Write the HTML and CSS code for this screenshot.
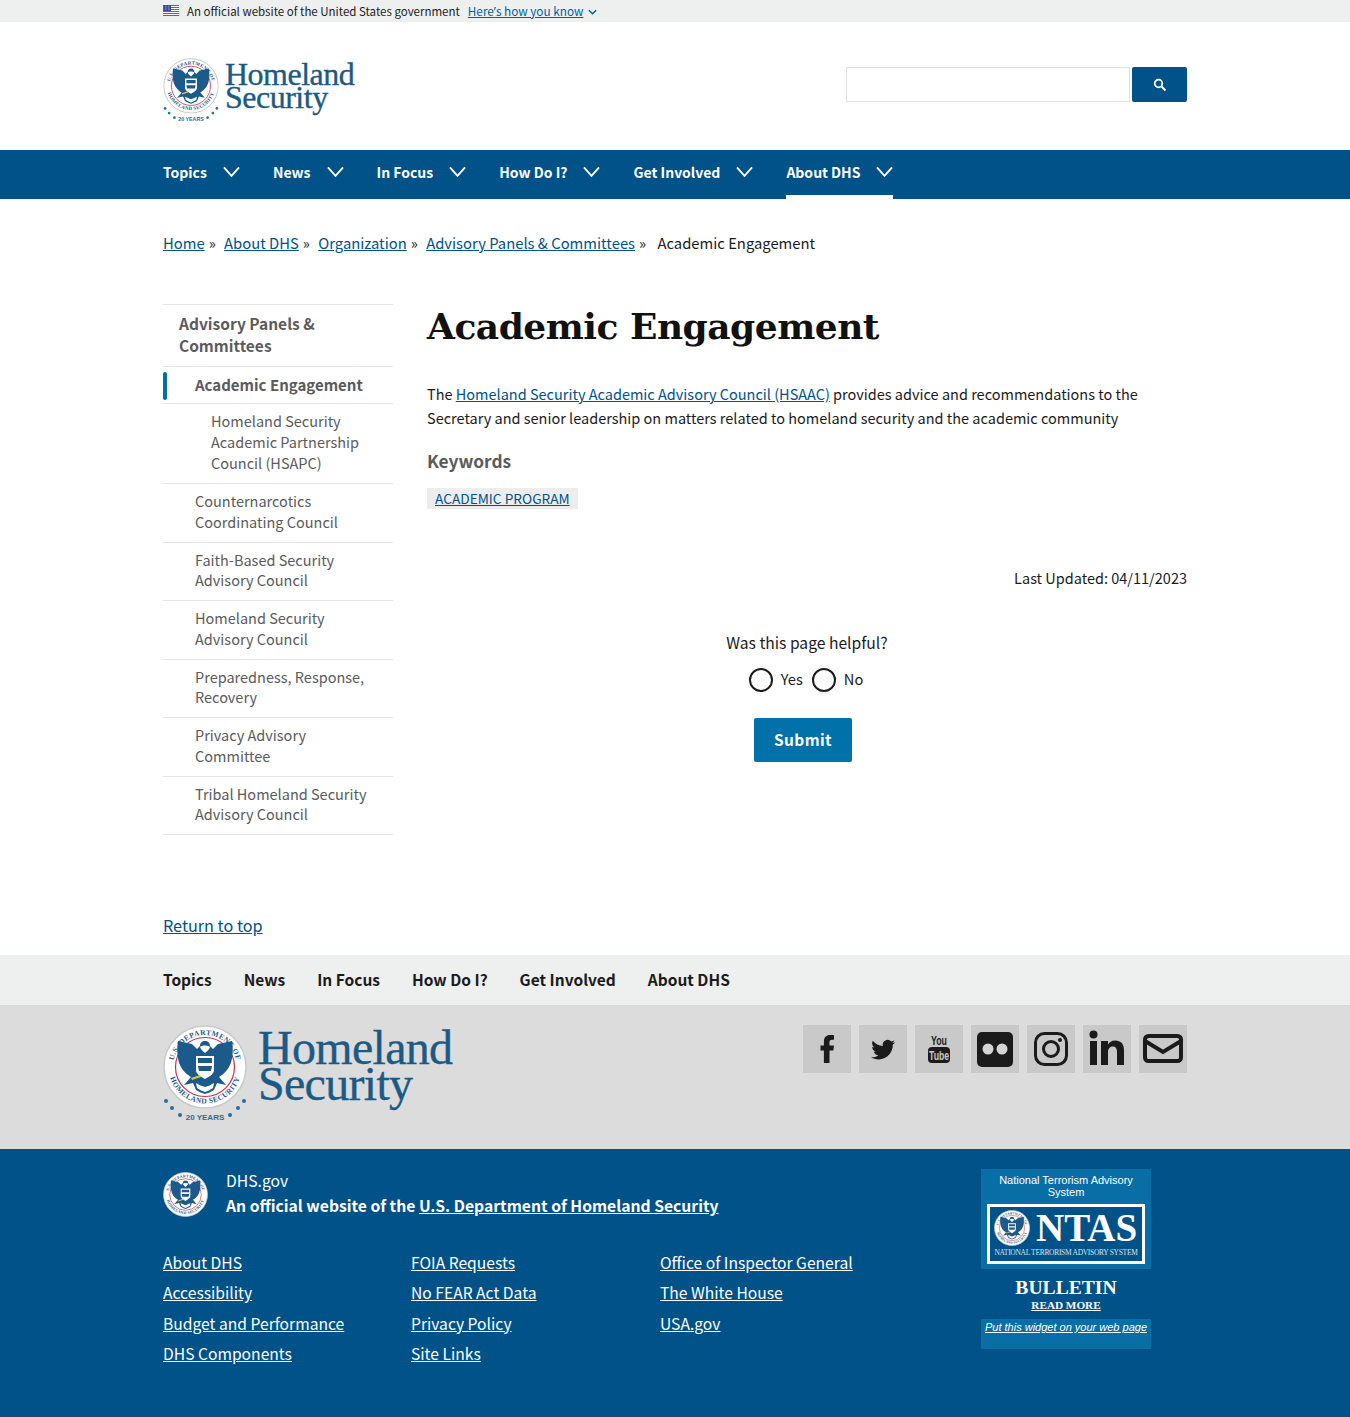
FILE: index.html
```html
<!DOCTYPE html>
<html lang="en">
<head>
<meta charset="utf-8">
<title>Academic Engagement | Homeland Security</title>
<link rel="stylesheet" href="styles.css">
</head>
<body>
<svg class="defs" aria-hidden="true">
  <defs>
    <path id="arc-top" d="M10 42a32 32 0 0 1 64 0"/>
    <path id="arc-bot" d="M5.500 42a36.500 36.500 0 0 0 73 0"/>
    <symbol id="seal" viewBox="0 0 84 84">
      <circle cx="42" cy="42" r="41" fill="#fff" stroke="#c8c8c8" stroke-width="1.500"/>
      <circle cx="42" cy="42" r="29.500" fill="#fff" stroke="#c4314b" stroke-width="1.200"/>
      <path fill="#1b5a8a" d="M42 16c-3 0-5 2-5 5l-3 3-5-5-14-3c-1 4-1 12 0 17 1 8 6 15 13 19l-7 8 9-2 3 7c3 2 6 3 9 4 3-1 6-2 9-4l3-7 9 2-7-8c7-4 12-11 13-19 1-5 1-13 0-17l-14 3-5 5-3-3c0-3-2-5-5-5z"/>
      <path fill="#fff" d="M37 22c2-2 8-2 10 0-1 3-3 4-5 6-2-2-4-3-5-6z"/>
      <path fill="#fff" d="M33 31h18v14c0 4-4 6-9 9-5-3-9-5-9-9z"/>
      <path fill="#1b5a8a" d="M35 33h14v5H35zM35 41h14l-1 5H36z"/>
      <path fill="#fff" d="M33 58c3 2 6 3 9 4 3-1 6-2 9-4l-1 5c-3 2-5 3-8 4-3-1-5-2-8-4z"/>
      <path fill="#d5c34a" d="M28 53l9-3 1 2-9 3z"/>
      <text class="seal-text"><textPath href="#arc-top" startOffset="50%" text-anchor="middle">U.S. DEPARTMENT OF</textPath></text>
      <text class="seal-text"><textPath href="#arc-bot" startOffset="50%" text-anchor="middle">HOMELAND SECURITY</textPath></text>
    </symbol>
    <symbol id="seal-20" viewBox="0 0 84 98">
      <use href="#seal" x="0" y="0" width="84" height="84"/>
      <text class="years" x="42" y="95" text-anchor="middle">20 YEARS</text>
      <g fill="#2a6d9a">
        <circle cx="3" cy="76" r="2"/><circle cx="9" cy="83" r="2"/><circle cx="17" cy="90" r="2"/>
        <circle cx="81" cy="76" r="2"/><circle cx="75" cy="83" r="2"/><circle cx="67" cy="90" r="2"/>
      </g>
    </symbol>
  </defs>
</svg>

<div class="gov-banner">
  <div class="wrap gov-row">
    <svg class="flag" viewBox="0 0 16 11" aria-hidden="true">
      <rect width="16" height="11" fill="#fff"/>
      <path fill="#d8394a" d="M0 0h16v1H0zM0 2h16v1H0zM0 4h16v1H0zM0 6h16v1H0zM0 8h16v1H0zM0 10h16v1H0z"/>
      <rect width="8" height="6" fill="#2d3a8c"/>
      <path stroke="#fff" stroke-width=".7" stroke-dasharray=".7 .8" d="M.5 1.200h7M.5 3h7M.5 4.800h7"/>
    </svg>
    <span class="gov-text">An official website of the United States government</span>
    <a class="gov-link" href="#">Here<span class="apos">’</span>s how you know</a>
    <svg class="gov-caret" viewBox="0 0 10 6" aria-hidden="true"><path d="M1 1l4 4 4-4" fill="none" stroke="#005ea2" stroke-width="1.600"/></svg>
  </div>
</div>

<header class="wrap site-header">
  <a class="logo logo-small" href="#">
    <svg class="logo-seal" aria-hidden="true"><use href="#seal-20"/></svg>
    <span class="wordmark">Homeland<br>Security</span>
  </a>
  <form class="search">
    <input class="search-input" type="text" aria-label="Search">
    <button class="search-btn" type="button" aria-label="Search">
      <svg viewBox="0 0 14 14" aria-hidden="true"><circle cx="5.500" cy="5.500" r="3.800" fill="none" stroke="#fff" stroke-width="1.800"/><path d="M8.500 8.500l4 4" stroke="#fff" stroke-width="2"/></svg>
    </button>
  </form>
</header>

<nav class="main-nav">
  <div class="wrap nav-row">
    <a class="nav-item" href="#"><span>Topics</span><svg class="chev" viewBox="0 0 18 12"><path d="M1 1l8 9 8-9"/></svg></a>
    <a class="nav-item" href="#"><span>News</span><svg class="chev" viewBox="0 0 18 12"><path d="M1 1l8 9 8-9"/></svg></a>
    <a class="nav-item" href="#"><span>In Focus</span><svg class="chev" viewBox="0 0 18 12"><path d="M1 1l8 9 8-9"/></svg></a>
    <a class="nav-item" href="#"><span>How Do I?</span><svg class="chev" viewBox="0 0 18 12"><path d="M1 1l8 9 8-9"/></svg></a>
    <a class="nav-item" href="#"><span>Get Involved</span><svg class="chev" viewBox="0 0 18 12"><path d="M1 1l8 9 8-9"/></svg></a>
    <a class="nav-item active" href="#"><span>About DHS</span><svg class="chev" viewBox="0 0 18 12"><path d="M1 1l8 9 8-9"/></svg></a>
  </div>
</nav>

<div class="wrap crumbs">
  <a href="#">Home</a><span class="sep">»</span>
  <a href="#">About DHS</a><span class="sep">»</span>
  <a href="#">Organization</a><span class="sep">»</span>
  <a href="#">Advisory Panels &amp; Committees</a><span class="sep">»</span>
  <span class="crumb-current">Academic Engagement</span>
</div>

<main class="wrap layout">
  <aside class="side">
    <a class="side-title" href="#">Advisory Panels &amp; Committees</a>
    <a class="side-item current" href="#">Academic Engagement</a>
    <a class="side-item nested" href="#">Homeland Security Academic Partnership Council (HSAPC)</a>
    <a class="side-item" href="#">Counternarcotics Coordinating Council</a>
    <a class="side-item" href="#">Faith-Based Security Advisory Council</a>
    <a class="side-item" href="#">Homeland Security Advisory Council</a>
    <a class="side-item" href="#">Preparedness, Response, Recovery</a>
    <a class="side-item" href="#">Privacy Advisory Committee</a>
    <a class="side-item" href="#">Tribal Homeland Security Advisory Council</a>
  </aside>
  <article class="content">
    <h1 class="title">Academic Engagement</h1>
    <p class="lead">The <a href="#">Homeland Security Academic Advisory Council (HSAAC)</a> provides advice and recommendations to the Secretary and senior leadership on matters related to homeland security and the academic community</p>
    <h2 class="kw-head">Keywords</h2>
    <div class="kw-row"><a class="kw-tag" href="#">ACADEMIC PROGRAM</a></div>
    <div class="updated">Last Updated: 04/11/2023</div>
    <form class="helpful">
      <div class="helpful-q">Was this page helpful?</div>
      <div class="helpful-opts">
        <span class="radio"></span><span class="opt">Yes</span>
        <span class="radio"></span><span class="opt">No</span>
      </div>
      <button class="submit" type="button">Submit</button>
    </form>
  </article>
</main>

<div class="wrap top-link"><a href="#">Return to top</a></div>

<div class="foot-nav">
  <div class="wrap foot-nav-row">
    <a href="#">Topics</a><a href="#">News</a><a href="#">In Focus</a><a href="#">How Do I?</a><a href="#">Get Involved</a><a href="#">About DHS</a>
  </div>
</div>

<div class="foot-logo">
  <div class="wrap foot-logo-row">
    <a class="logo logo-large" href="#">
      <svg class="logo-seal" aria-hidden="true"><use href="#seal-20"/></svg>
      <span class="wordmark">Homeland<br>Security</span>
    </a>
    <div class="social">
      <a class="soc" href="#" aria-label="Facebook"><svg viewBox="0 0 48 48"><path d="M26.500 38V25.500h3.800l.7-5h-4.500v-3.200c0-1.500.5-2.500 2.500-2.500H31V10.300c-.5-.1-2-.3-3.800-.3-3.800 0-6.300 2.300-6.300 6.500v4h-3.400v5h3.400V38z"/></svg></a>
      <a class="soc" href="#" aria-label="Twitter"><svg viewBox="0 0 48 48"><path d="M36 17.200c-.9.400-1.800.6-2.800.8 1-.6 1.800-1.600 2.200-2.700-1 .6-2 1-3.100 1.200a4.900 4.900 0 0 0-8.400 4.500c-4.100-.2-7.700-2.200-10.100-5.200-1.300 2.200-.7 5.100 1.500 6.600-.8 0-1.600-.2-2.200-.6 0 2.400 1.700 4.400 3.900 4.900-.7.200-1.500.2-2.200.1.600 1.900 2.400 3.400 4.600 3.400-2.100 1.600-4.700 2.300-7.300 2 2.200 1.400 4.800 2.200 7.500 2.200 9.300 0 14.500-7.800 14.200-14.800 1-.7 1.800-1.600 2.400-2.600z"/></svg></a>
      <a class="soc" href="#" aria-label="YouTube"><svg viewBox="0 0 48 48"><text class="yt-you" x="24" y="20" text-anchor="middle" textLength="16" lengthAdjust="spacingAndGlyphs">You</text><rect x="13" y="22" width="22" height="16" rx="4"/><text class="yt-tube" x="24" y="35" text-anchor="middle" textLength="20" lengthAdjust="spacingAndGlyphs">Tube</text></svg></a>
      <a class="soc" href="#" aria-label="Flickr"><svg viewBox="0 0 48 48"><rect x="6" y="7" width="36" height="35" rx="5"/><circle cx="17" cy="24" r="5.500" fill="#d4d4d4"/><circle cx="31" cy="24" r="5.500" fill="#d4d4d4"/></svg></a>
      <a class="soc" href="#" aria-label="Instagram"><svg viewBox="0 0 48 48"><rect x="8.500" y="8.500" width="31" height="31" rx="9" fill="none" stroke="#1b1b1b" stroke-width="3"/><circle cx="24" cy="24" r="7.500" fill="none" stroke="#1b1b1b" stroke-width="3"/><circle cx="33" cy="15" r="2"/></svg></a>
      <a class="soc" href="#" aria-label="LinkedIn"><svg viewBox="0 0 48 48"><circle cx="10.500" cy="9.500" r="4"/><rect x="7" y="16" width="7" height="24"/><path d="M18 16h7v3.500c1.200-2.300 3.700-4 7-4 6 0 9 3.500 9 10V40h-7V27c0-3.500-1.200-5.500-4-5.500s-5 2-5 5.500v13h-7z"/></svg></a>
      <a class="soc" href="#" aria-label="Email"><svg viewBox="0 0 48 48"><rect x="6" y="11" width="36" height="25" rx="3.500" fill="none" stroke="#1b1b1b" stroke-width="4"/><path d="M6 16l18 11 18-11" fill="none" stroke="#1b1b1b" stroke-width="4"/></svg></a>
    </div>
  </div>
</div>

<footer class="foot-main">
  <div class="wrap foot-main-row">
    <div class="foot-left">
      <div class="identity">
        <svg class="id-seal" aria-hidden="true"><use href="#seal"/></svg>
        <div>
          <div class="id-site">DHS.gov</div>
          <div class="id-line">An official website of the <a href="#">U.S. Department of Homeland Security</a></div>
        </div>
      </div>
      <div class="foot-links">
        <a href="#">About DHS</a><a href="#">FOIA Requests</a><a href="#">Office of Inspector General</a>
        <a href="#">Accessibility</a><a href="#">No FEAR Act Data</a><a href="#">The White House</a>
        <a href="#">Budget and Performance</a><a href="#">Privacy Policy</a><a href="#">USA.gov</a>
        <a href="#">DHS Components</a><a href="#">Site Links</a>
      </div>
    </div>
    <aside class="ntas">
      <div class="ntas-top">
        <div class="ntas-title">National Terrorism Advisory System</div>
        <div class="ntas-box">
          <div class="ntas-brand">
            <svg class="ntas-seal" aria-hidden="true"><use href="#seal"/></svg>
            <span class="ntas-word">NTAS</span>
          </div>
          <div class="ntas-sub">NATIONAL TERRORISM ADVISORY SYSTEM</div>
        </div>
      </div>
      <div class="ntas-mid">
        <div class="ntas-bulletin">BULLETIN</div>
        <a class="ntas-read" href="#">READ MORE</a>
      </div>
      <div class="ntas-bot"><a href="#">Put this widget on your web page</a></div>
    </aside>
  </div>
</footer>
</body>
</html>
```
FILE: styles.css
```css
* { box-sizing: border-box; }
html, body { margin: 0; padding: 0; }
body {
  font-family: "Noto Sans CJK SC", "Noto Sans", sans-serif;
  font-size: 14.500px;
  color: #1b1b1b;
  background: #fff;
}
.defs { position: absolute; width: 0; height: 0; overflow: hidden; }
.wrap { width: 1024px; margin: 0 auto; }
a { color: #005288; }

.seal-text { font: 700 7.500px "Liberation Serif", serif; fill: #1b5a8a; letter-spacing: .4px; }
.years { font: 700 8px "Liberation Sans", sans-serif; fill: #2a6d9a; }

.gov-banner { background: #eeefef; height: 22px; }
.gov-row { display: flex; align-items: center; height: 21px; font-size: 11.500px; }
.flag { width: 16px; height: 11px; margin-right: 8px; }
.gov-text { margin-right: 8px; }
.gov-link { color: #005ea2; font-size: 11.750px; }
.apos { font-family: "Noto Sans", sans-serif; }
.gov-caret { width: 9px; height: 6px; margin-left: 5px; margin-top: 2px; }

.site-header { height: 128px; display: flex; justify-content: space-between; align-items: flex-start; }
.logo { display: flex; text-decoration: none; color: #1b5a86; }
.logo-small { margin-top: 36px; }
.logo-small .logo-seal { width: 56px; height: 65px; margin-right: 6px; }
.wordmark { font-family: "Liberation Serif", serif; display: block; -webkit-text-stroke: .35px #1b5a86; }
.logo-small .wordmark { font-size: 32px; line-height: 23px; padding-top: 5px; letter-spacing: -.5px; }
.search { display: flex; margin-top: 45px; gap: 2px; }
.search-input { width: 284px; height: 35px; border: 1px solid #dfe1e2; background: #fff; }
.search-btn { width: 55px; height: 35px; border: 0; background: #005288; border-radius: 2px; display: flex; align-items: center; justify-content: center; padding: 0; }
.search-btn svg { width: 14px; height: 14px; }

.main-nav { background: #005288; height: 49px; }
.nav-row { display: flex; gap: 33px; height: 49px; }
.nav-item { display: flex; align-items: center; color: #fff; font-weight: 700; font-size: 14px; text-decoration: none; height: 49px; padding-bottom: 5px; }
.nav-item span { margin-right: 16px; }
.chev { width: 17px; height: 12px; fill: none; stroke: #fff; stroke-width: 2; }
.nav-item.active { border-bottom: 4px solid #fff; padding-bottom: 1px; }

.crumbs { padding-top: 33px; height: 105px; font-size: 14.800px; line-height: 24px; color: #1b1b1b; margin-top: -1px; margin-bottom: 1px; }
.sep { margin: 0 5px 0 4px; }
.crumb-current { margin-left: 3px; }

.layout { display: flex; gap: 34px; height: 609px; }
.side { width: 230px; flex: none; display: flex; flex-direction: column; align-items: stretch; }
.side a { color: #5b5b5b; text-decoration: none; display: block; border-bottom: 1px solid #e6e6e6; }
.side-title { border-top: 1px solid #e6e6e6; padding: 7px 16px 10px; font-size: 15.500px; line-height: 22px; font-weight: 700; }
.side-item { padding: 7px 16px 9px 32px; line-height: 20.800px; height: 58.500px; }
.side-item.current { font-weight: 700; height: 37px; position: relative; font-size: 15px; padding-top: 8px; }
.side-item.current::before { content: ""; position: absolute; left: 0; top: 5px; width: 4px; height: 28px; background: #0071a6; border-radius: 2px; }
.side-item.nested { padding-left: 48px; height: 80px; }

.content { flex: 1; min-width: 0; }
.title { font: 700 36px/44px "DejaVu Serif", serif; margin: 0; color: #111; letter-spacing: -.5px; }
.lead { margin: 34px 0 0; line-height: 24px; }
.kw-head { font-size: 17.300px; line-height: 24px; margin: 19px 0 0; color: #5b5b5b; font-weight: 700; }
.kw-row { margin-top: 15px; line-height: 21px; height: 21px; display: flex; }
.kw-tag { background: #ededed; padding: 0 8px; font-size: 13.700px; }
.updated { text-align: right; margin-top: 57px; line-height: 24px; }
.helpful { margin-top: 41px; display: flex; flex-direction: column; align-items: center; }
.helpful-q { line-height: 24px; font-size: 15.650px; }
.helpful-opts { display: flex; align-items: center; margin-top: 13px; height: 24px; font-size: 14.700px; padding-right: 2px; }
.radio { width: 24px; height: 24px; border-radius: 50%; border: 2px solid #1b1b1b; background: #fff; margin-right: 8px; }
.opt { margin-right: 9px; margin-bottom: 3px; }
.opt:last-child { margin-right: 0; }
.submit { margin-top: 26px; margin-right: 8px; width: 98px; height: 44px; border: 0; border-radius: 2px; background: #0071a9; color: #fff; font: 700 15.500px "Noto Sans CJK SC", sans-serif; letter-spacing: .4px; padding: 0 0 2px; }

.top-link { height: 42px; margin-top: -1px; margin-bottom: 1px; font-size: 16.200px; line-height: 26px; }

.foot-nav { background: #eeefef; height: 50px; }
.foot-nav-row { display: flex; gap: 32px; align-items: center; height: 48px; }
.foot-nav-row a { color: #1b1b1b; font-weight: 700; font-size: 15.500px; text-decoration: none; }

.foot-logo { background: #dcdcdc; height: 144px; }
.foot-logo-row { display: flex; justify-content: space-between; padding-top: 20px; }
.logo-large .logo-seal { width: 84px; height: 98px; margin-right: 11px; }
.logo-large .wordmark { font-size: 48px; line-height: 36px; padding-top: 5px; letter-spacing: -.7px; }
.social { display: flex; gap: 8px; }
.soc { width: 48px; height: 48px; background: #c9c9c9; display: block; }
.soc svg { width: 48px; height: 48px; fill: #1b1b1b; display: block; }
.yt-you { font: 700 13px "Liberation Sans", sans-serif; fill: #1b1b1b; }
.yt-tube { font: 700 13px "Liberation Sans", sans-serif; fill: #c9c9c9; }

.foot-main { background: #005288; height: 268px; color: #fff; }
.foot-main a { color: #fff; }
.foot-main-row { display: flex; justify-content: space-between; padding-top: 20px; padding-right: 36px; }
.foot-left { width: 760px; }
.identity { display: flex; gap: 18px; font-size: 15.700px; line-height: 25px; margin-top: -1px; }
.id-seal { width: 45px; height: 45px; margin-top: 4px; }
.id-line { font-weight: 700; }
.foot-links { display: grid; grid-template-columns: 248px 249px 1fr; margin-top: 30px; font-size: 15.650px; line-height: 30.300px; }

.ntas { width: 170px; background: #005288; font-family: "Liberation Sans", Arial, sans-serif; text-align: center; }
.ntas-top { background: #0a6ea6; height: 100px; padding: 5px 6px 0; }
.ntas-title { font-size: 11px; line-height: 12px; }
.ntas-box { border: 3px solid #fff; background: #005288; height: 60px; margin-top: 6px; padding: 2px 4px 0; }
.ntas-brand { display: flex; align-items: center; gap: 6px; height: 38px; }
.ntas-seal { width: 36px; height: 36px; flex: none; }
.ntas-word { font: 700 39px/38px "Liberation Serif", serif; }
.ntas-sub { font: 7.500px/12px "Liberation Serif", serif; white-space: nowrap; letter-spacing: -.3px; color: #d7e6f0; }
.ntas-mid { height: 50px; padding-top: 9px; font-family: "Liberation Serif", serif; font-weight: 700; }
.ntas-bulletin { font-size: 19.600px; line-height: 20px; }
.ntas-read { font-size: 11.200px; line-height: 15px; display: block; }
.ntas-bot { background: #0a6ea6; height: 30px; font-size: 11px; font-style: italic; line-height: 17px; }
```
